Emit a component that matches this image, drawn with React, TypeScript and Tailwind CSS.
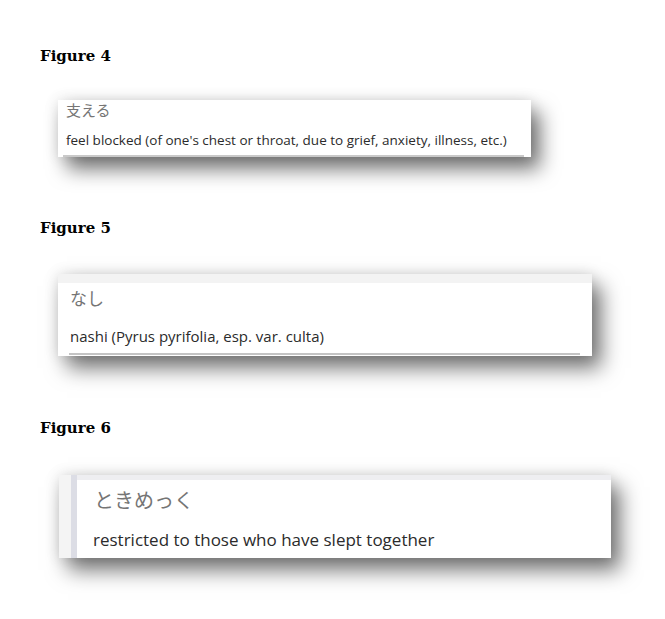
export default function App() {
  const caption = "font-['DejaVu_Serif',serif] font-bold text-[15px] leading-[20px] text-black";
  const jp = "font-['Noto_Sans_CJK_JP',sans-serif] text-[#757575] whitespace-nowrap";
  const en = "font-['Open_Sans',sans-serif] text-[#2b2b2b] whitespace-nowrap";
  const shadow = "shadow-[9px_12px_20px_rgba(0,0,0,0.55),0_0_14px_rgba(0,0,0,0.12)]";

  return (
    <div className="min-h-screen bg-white pl-10 pt-[46px]">
      <p className={caption}>Figure 4</p>
      <div className={`ml-[18px] mt-[34px] w-[473px] h-[57px] bg-white flex flex-col ${shadow}`}>
        <div className={`${jp} pl-2 pt-px text-[15px] leading-[18px]`}>支える</div>
        <div className={`${en} pl-2 mt-3 text-[13.5px] leading-[18px]`}>
          feel blocked (of one's chest or throat, due to grief, anxiety, illness, etc.)
        </div>
        <div className="mt-auto ml-[5px] mr-[7px] h-[2px] bg-[#c9c9c9]" />
      </div>

      <p className={`${caption} mt-[61px]`}>Figure 5</p>
      <div className={`ml-[18px] mt-9 w-[534px] h-[82px] bg-white flex flex-col ${shadow}`}>
        <div className="h-[9px] bg-[#f3f3f3]" />
        <div className={`${jp} pl-3 mt-1 text-[17px] leading-[22px]`}>なし</div>
        <div className={`${en} pl-3 mt-[17px] text-[15px] leading-[20px]`}>
          nashi (Pyrus pyrifolia, esp. var. culta)
        </div>
        <div className="mt-[7px] ml-[11px] mr-3 h-[2px] bg-[#c4c4c4]" />
      </div>

      <p className={`${caption} mt-[62px]`}>Figure 6</p>
      <div className={`ml-[19px] mt-[37px] w-[552px] h-[83px] flex bg-[#f4f4f4] ${shadow}`}>
        <div className="w-3 shrink-0" />
        <div className="w-[6px] shrink-0 bg-[#dcdde5]" />
        <div className="flex-1 flex flex-col bg-white">
          <div className="h-[5px] bg-[#eeeef1]" />
          <div className={`${jp} pl-[17px] mt-[7px] text-[20px] leading-[26px]`}>ときめっく</div>
          <div className={`${en} pl-4 mt-[15px] text-[17px] leading-[24px]`}>
            restricted to those who have slept together
          </div>
        </div>
      </div>
    </div>
  );
}
